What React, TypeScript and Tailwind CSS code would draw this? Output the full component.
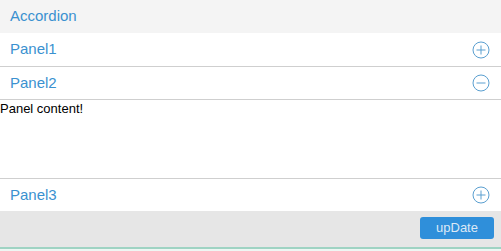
import React from "react";

const blue = "text-[#3a91d0]";

function Icon({ open }: { open: boolean }) {
  return (
    <svg width="18" height="18" viewBox="0 0 18 18" fill="none" stroke="#5a9fd0" strokeWidth="1">
      <circle cx="9" cy="9" r="8" />
      <line x1="4.5" y1="9" x2="13.5" y2="9" />
      {!open && <line x1="9" y1="4.5" x2="9" y2="13.5" />}
    </svg>
  );
}

function Row({ label, open, h, border }: { label: string; open: boolean; h: string; border: boolean }) {
  return (
    <div className={`flex items-center justify-between pl-[10px] pr-[11px] bg-white ${h} ${border ? "border-b border-[#cfcfcf]" : ""}`}>
      <span className={`text-[15px] ${blue}`}>{label}</span>
      <Icon open={open} />
    </div>
  );
}

export default function App() {
  return (
    <div className="w-[501px] h-[251px] flex flex-col bg-white" style={{ fontFamily: '"Liberation Sans", Arial, sans-serif' }}>
      <div className={`h-[33px] flex items-center px-[10px] bg-[#f4f4f4] text-[15px] ${blue}`}>Accordion</div>
      <Row label="Panel1" open={false} h="h-[34px]" border />
      <Row label="Panel2" open={true} h="h-[33px]" border />
      <div className="h-[79px] border-b border-[#cfcfcf] text-[13px] text-black leading-[16px] pt-[1px]">Panel content!</div>
      <Row label="Panel3" open={false} h="h-[32px]" border={false} />
      <div className="h-[36px] bg-[#e6e6e6] flex justify-end items-start pt-[6px] pr-[7px]">
        <button className="w-[74px] h-[22px] rounded-[3px] bg-[#2f8fda] text-[#dbe9f6] text-[13px] leading-[22px]">upDate</button>
      </div>
      <div className="h-[2px] bg-[#9fd3c3]" />
      <div className="flex-1 bg-[#eef6f3]" />
    </div>
  );
}
